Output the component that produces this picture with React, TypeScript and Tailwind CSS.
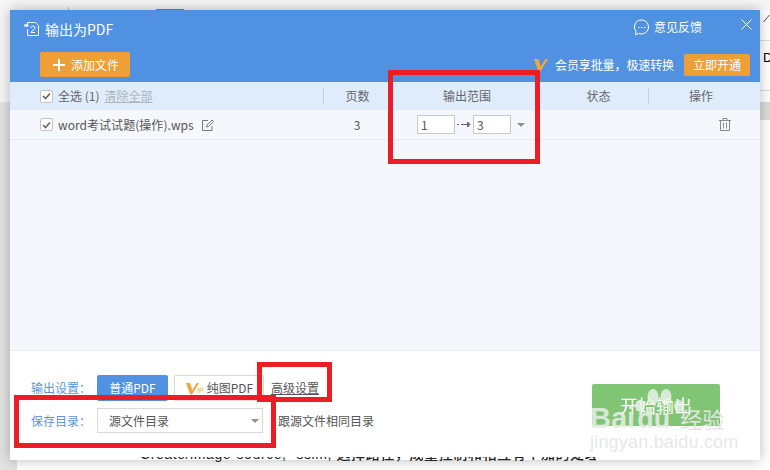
import React from "react";

const font = { fontFamily: '"Noto Sans CJK SC", "Liberation Sans", sans-serif' };
const latin = { fontFamily: '"Liberation Sans", "Noto Sans CJK SC", sans-serif' };

function Check() {
  return (
    <span className="flex h-[13px] w-[13px] shrink-0 items-center justify-center rounded-[2px] border border-[#c4c4c4] bg-white">
      <svg width="9" height="8" viewBox="0 0 9 8" fill="none">
        <path d="M1 4l2.500 2.500L8 1.500" stroke="#666" strokeWidth="1.600" />
      </svg>
    </span>
  );
}

function VipV({ size = 14 }: { size?: number }) {
  return (
    <svg width={size} height={size} viewBox="0 0 14 14">
      <path d="M0 1h4.500l2.300 7.500L11.500 1H14L6.500 13.500H4.500z" fill="#f4a63c" />
    </svg>
  );
}

function Red({ className }: { className: string }) {
  return <div className={`pointer-events-none absolute border-[5px] border-[#ee1c25] ${className}`} />;
}

export default function App() {
  return (
    <div className="relative h-[470px] w-[770px] overflow-hidden bg-white" style={font}>
      {/* page behind */}
      <div className="absolute left-0 top-0 h-[10px] w-[770px] bg-[#f6f6f6]" />
      <div className="absolute left-0 top-0 h-[102px] w-[17px] bg-[#f6f6f6]" />
      <div className="absolute left-0 top-[102px] h-[368px] w-[17px] bg-[#e2e2e2]" />
      <div className="absolute left-[68px] top-[7px] h-[3px] w-px bg-[#bbbbbb]" />
      <div className="absolute left-[156px] top-[9px] h-px w-[28px] bg-[#5a86c8]" />
      <svg className="absolute left-[763px] top-[14px]" width="7" height="9" viewBox="0 0 7 9" fill="none" stroke="#555">
        <path d="M0.500 8L6.500 1" />
      </svg>
      <div className="absolute left-[760px] top-[40px] h-px w-[10px] bg-[#dddddd]" />
      <div className="absolute left-[760px] top-[90px] h-px w-[10px] bg-[#dddddd]" />
      <div className="absolute left-[760px] top-[102px] h-[18px] w-[10px] bg-[#dcdcdc]" />
      <div className="absolute left-[763px] top-[50px] text-[13px] leading-[16px] text-black" style={latin}>D</div>

      {/* dialog */}
      <div className="absolute left-[10px] top-[10px] flex h-[450px] w-[750px] flex-col bg-white shadow-[0_0_12px_rgba(0,0,0,0.28)]">
        <div className="relative h-[72px] shrink-0 bg-[#5191e1] text-white">
          <div className="flex h-[38px] items-center pl-[14px]">
            <svg width="16" height="16" viewBox="0 0 16 16" fill="none" stroke="#fff" strokeWidth="1">
              <path d="M3.500 3.500V1.500h8l3 3v10h-11V8" />
              <path d="M0 4.500h3" strokeWidth="2" />
              <path d="M2.500 2.500l2.500 2-2.500 2z" fill="#fff" stroke="none" />
              <path d="M7 7c0-2.500 4-2.500 4 0 0 1.500-3 2-4 4.500h4" />
            </svg>
            <span className="ml-[5px] text-[14px] leading-[20px]">输出为PDF</span>
            <div className="-mt-[4px] ml-auto mr-[58px] flex items-center gap-[4px]">
              <svg width="17" height="17" viewBox="0 0 17 17" fill="none" stroke="#fff">
                <path d="M8.500 1a7 7 0 0 1 0 14c-1 0-2-.2-3-.6L2.500 16l.5-3.500A7 7 0 0 1 8.500 1z" />
                <path d="M5 8.500h1.500M8 8.500h1.500M11 8.500h1.500" strokeWidth="1.200" />
              </svg>
              <span className="text-[12px] leading-[18px]">意见反馈</span>
            </div>
          </div>
          <svg className="absolute right-[8px] top-[9px]" width="11" height="11" viewBox="0 0 11 11" stroke="#fff" strokeWidth="1">
            <path d="M0.500 0.500l10 10M10.500 0.500l-10 10" />
          </svg>
          <div className="mt-[4px] flex h-[25px] items-center pl-[30px] pr-[10px]">
            <button className="flex h-[25px] w-[90px] items-center justify-start gap-[6px] rounded-[2px] bg-[#ee9f35] pl-[13px] text-[12px] text-white">
              <svg width="12" height="12" viewBox="0 0 12 12" stroke="#fff" strokeWidth="2">
                <path d="M6 0v12M0 6h12" />
              </svg>
              添加文件
            </button>
            <div className="ml-auto flex items-center">
              <VipV />
              <span className="ml-[7px] text-[12px] tracking-[-0.1px]">会员享批量，极速转换</span>
              <button className="ml-[10px] h-[22px] w-[66px] rounded-[2px] bg-[#ee9f35] text-[12px] text-white">立即开通</button>
            </div>
          </div>
        </div>

        <div className="flex h-[28px] shrink-0 items-center bg-[#dfecfc] text-[12px] text-[#666]">
          <div className="flex w-[313px] items-center pl-[30px]">
            <Check />
            <span className="ml-[5px]">全选 (1)</span>
            <span className="ml-[5px] text-[#aeb4bb] underline">清除全部</span>
          </div>
          <div className="h-[16px] w-px bg-[#c7cfd9]" />
          <div className="w-[67px] text-center">页数</div>
          <div className="h-[16px] w-px bg-[#c7cfd9]" />
          <div className="w-[150px] text-center">输出范围</div>
          <div className="w-[106px] pl-[7px] text-center">状态</div>
          <div className="h-[16px] w-px bg-[#c7cfd9]" />
          <div className="w-[104px] text-center">操作</div>
        </div>

        <div className="flex-1 bg-[#f4f8fd]">
          <div className="flex h-[30px] items-center border-b border-[#e8ecf0] text-[12px] text-[#555]">
            <div className="flex w-[314px] items-center pl-[30px]">
              <Check />
              <span className="ml-[5px] text-[12px] tracking-[0.05px]">word考试试题(操作).wps</span>
              <svg className="ml-[8px]" width="12" height="12" viewBox="0 0 12 12" fill="none" stroke="#777">
                <path d="M10 7v4.500H0.500V1.500H6" />
                <path d="M4.500 8l.5-2 5-5 1.500 1.500-5 5z" />
              </svg>
            </div>
            <div className="w-[66px] text-center text-[12px]">3</div>
            <div className="flex items-center pl-[27px]">
              <span className="flex h-[19px] w-[38px] items-center border border-[#c8c8c8] bg-white pl-[3px]">1</span>
              <svg className="mx-[2px]" width="14" height="7" viewBox="0 0 14 7" fill="none" stroke="#666">
                <path d="M0 3.500h2M4 3.500h8" />
                <path d="M10.500 1l2.500 2.500-2.500 2.500z" fill="#666" />
              </svg>
              <span className="flex h-[19px] w-[38px] items-center border border-[#c8c8c8] bg-white pl-[3px]">3</span>
              <div className="ml-[6px] h-0 w-0 border-x-[4px] border-t-[4px] border-x-transparent border-t-[#909090]" />
            </div>
            <svg className="ml-[194px]" width="12" height="13" viewBox="0 0 12 13" fill="none" stroke="#888">
              <path d="M0 2.500h12M4 2.500V.5h4v2M1.500 2.500v10h9v-10M4.500 4.500v6M7.500 4.500v6" />
            </svg>
          </div>
        </div>

        <div className="h-[110px] shrink-0 border-t border-[#e6eaef] bg-white pl-[21px] pt-[24px]">
          <div className="flex h-[26px] items-center">
            <span className="w-[66px] text-[12px] text-[#5b93de]">输出设置：</span>
            <span className="flex h-[26px] w-[71px] items-center justify-center rounded-[2px] bg-[#5191e1] text-[12px] text-white">普通PDF</span>
            <span className="ml-[6px] flex h-[26px] w-[90px] items-center rounded-[2px] border border-[#d8d8d8] pl-[11px] text-[12px] text-[#555]">
              <VipV size={13} />
              <span className="-ml-[2px] mt-[6px] text-[7px] leading-[8px] text-[#f4a63c]" style={latin}>IP</span>
              <span className="ml-[3px]">纯图PDF</span>
            </span>
            <span className="ml-[7px] text-[12px] text-[#555] underline">高级设置</span>
          </div>
          <div className="mt-[7px] flex h-[25px] items-center">
            <span className="w-[66px] text-[12px] text-[#5b93de]">保存目录：</span>
            <div className="flex h-[25px] w-[166px] items-center justify-between border border-[#d8d8d8] pl-[11px] pr-[3px] text-[12px] text-[#555]">
              源文件目录
              <div className="h-0 w-0 border-x-[4px] border-t-[4px] border-x-transparent border-t-[#909090]" />
            </div>
            <span className="ml-[15px] text-[12px] text-[#555]">跟源文件相同目录</span>
          </div>
        </div>
      </div>

      <button className="absolute left-[592px] top-[384px] h-[42px] w-[128px] rounded-[2px] bg-[#7fc574] text-[18px] text-white">开始输出</button>

      {/* page text showing past the dialog's lower edge */}
      <div className="absolute left-[140px] top-[457px] h-[6px] w-[456px] overflow-hidden">
        <div className="-mt-[12px] whitespace-nowrap text-[14px] font-medium leading-[18px] tracking-[0.6px] text-[#222]" style={latin}>
          Create/image-source, -ssim, 选择路径，成量控制和相互有个加的处理
        </div>
      </div>

      {/* red annotations */}
      <Red className="left-[388px] top-[70px] h-[94px] w-[152px]" />
      <Red className="left-[257px] top-[362px] h-[40px] w-[75px]" />
      <Red className="left-[14px] top-[395px] h-[53px] w-[262px]" />

      {/* watermark */}
      <div className="pointer-events-none absolute left-[590px] top-[386px] h-[66px] w-[140px]">
        <svg className="absolute left-0 top-0" width="140" height="44" viewBox="0 0 140 44" fill="#eef3ee" fillOpacity="0.8">
          <ellipse cx="63" cy="11" rx="5.500" ry="8" />
          <ellipse cx="76" cy="11" rx="5.500" ry="8" />
          <ellipse cx="50" cy="20" rx="5" ry="6" />
          <ellipse cx="89" cy="20" rx="5" ry="6" />
        </svg>
        <div className="absolute left-0 top-[16px] flex items-baseline whitespace-nowrap">
          <span className="text-[29px] font-bold leading-[32px] text-[#e6ece6]/90" style={latin}>Bai</span>
          <span className="ml-[2px] text-[27px] font-bold leading-[32px] text-[#e6ece6]/90" style={latin}>du</span>
          <span className="ml-[10px] text-[22px] leading-[32px] text-[#e3e6e3]">经验</span>
        </div>
        <div className="absolute left-0 top-[47px] whitespace-nowrap text-[18px] leading-[18px] tracking-[0.2px] text-[#e8e8e8]" style={latin}>jingyan.baidu.com</div>
      </div>
    </div>
  );
}
